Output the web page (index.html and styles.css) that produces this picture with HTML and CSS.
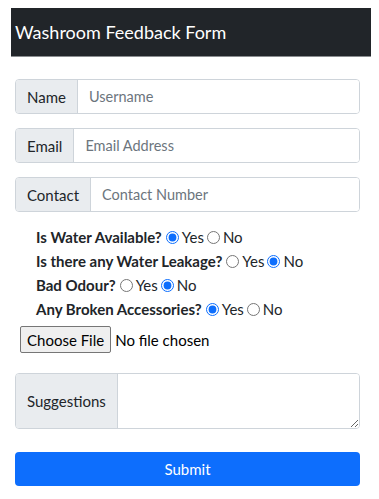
FILE: index.html
```html
<!DOCTYPE html>
<html>
<head>
<meta charset="utf-8">
<link rel="stylesheet" href="styles.css">
</head>
<body>
<div class="page">
  <header class="topbar"><span class="brand">Washroom Feedback Form</span></header>
  <form class="form">
    <div class="group"><span class="addon">Name</span><input class="field" type="text" placeholder="Username"></div>
    <div class="group"><span class="addon">Email</span><input class="field" type="text" placeholder="Email Address"></div>
    <div class="group"><span class="addon">Contact</span><input class="field" type="text" placeholder="Contact Number"></div>
    <div class="questions">
      <div class="q"><b>Is Water Available?</b> <input type="radio" name="a" checked><span>Yes</span><input type="radio" name="a"><span>No</span></div>
      <div class="q"><b>Is there any Water Leakage?</b> <input type="radio" name="b"><span>Yes</span><input type="radio" name="b" checked><span>No</span></div>
      <div class="q"><b>Bad Odour?</b> <input type="radio" name="c"><span>Yes</span><input type="radio" name="c" checked><span>No</span></div>
      <div class="q"><b>Any Broken Accessories?</b> <input type="radio" name="d" checked><span>Yes</span><input type="radio" name="d"><span>No</span></div>
    </div>
    <div class="filerow"><span class="filebtn">Choose File</span><span class="filetext">No file chosen</span></div>
    <div class="group tall"><span class="addon">Suggestions</span><textarea class="field area"></textarea></div>
    <button type="button" class="submit">Submit</button>
  </form>
</div>
</body>
</html>
```
FILE: styles.css
```css
*, *::before, *::after { box-sizing: border-box; }
html, body { margin: 0; padding: 0; background: #fff; }
body { font-family: "Lato", "Open Sans", sans-serif; color: #212529; }
.page { padding: 8px 8px 0 11px; }
.topbar {
  height: 49px;
  background: #212529;
  border-bottom: 1px solid #8a8d90;
  display: flex;
  align-items: center;
  padding-left: 4px;
}
.brand { color: #fff; font-size: 18px; }
.form { padding: 22px 11px 0 4px; display: flex; flex-direction: column; }
.group {
  display: flex;
  height: 35px;
  margin-bottom: 14px;
  border: 1px solid #ced4da;
  border-radius: 4px;
  overflow: hidden;
}
.addon {
  background: #e9ecef;
  border-right: 1px solid #ced4da;
  padding: 0 11px;
  display: flex;
  align-items: center;
  font-size: 15px;
  color: #212529;
}
.field {
  flex: 1;
  border: 0;
  outline: 0;
  padding: 0 11px;
  font: inherit;
  font-size: 14.5px;
  color: #212529;
  min-width: 0;
}
.field::placeholder { color: #6c757d; }
.questions { padding: 0 0 0 21px; margin-top: -1px; }
.q { height: 24px; display: flex; align-items: center; font-size: 15px; }
.q b { font-weight: 700; margin-right: 4px; }
.q input { margin: 0 3px 0 0; width: 13px; height: 13px; accent-color: #0d6efd; }
.q span { margin-right: 3px; color: #212529; }
.filerow { display: flex; align-items: center; margin: 5px 0 0 5px; font-size: 15px; }
.filebtn {
  height: 27px;
  padding: 0 6px;
  display: flex;
  align-items: center;
  border: 1px solid #767676;
  border-radius: 2px;
  background: #efefef;
  color: #000;
}
.filetext { margin-left: 4px; color: #000; }
.group.tall { height: 56px; margin-top: 20px; margin-bottom: 23px; }
.area { resize: vertical; padding: 6px 12px; }
.submit {
  height: 34px;
  background: #0d6efd;
  color: #fff;
  border: 0;
  border-radius: 4px;
  font: inherit;
  font-size: 15px;
}
```
